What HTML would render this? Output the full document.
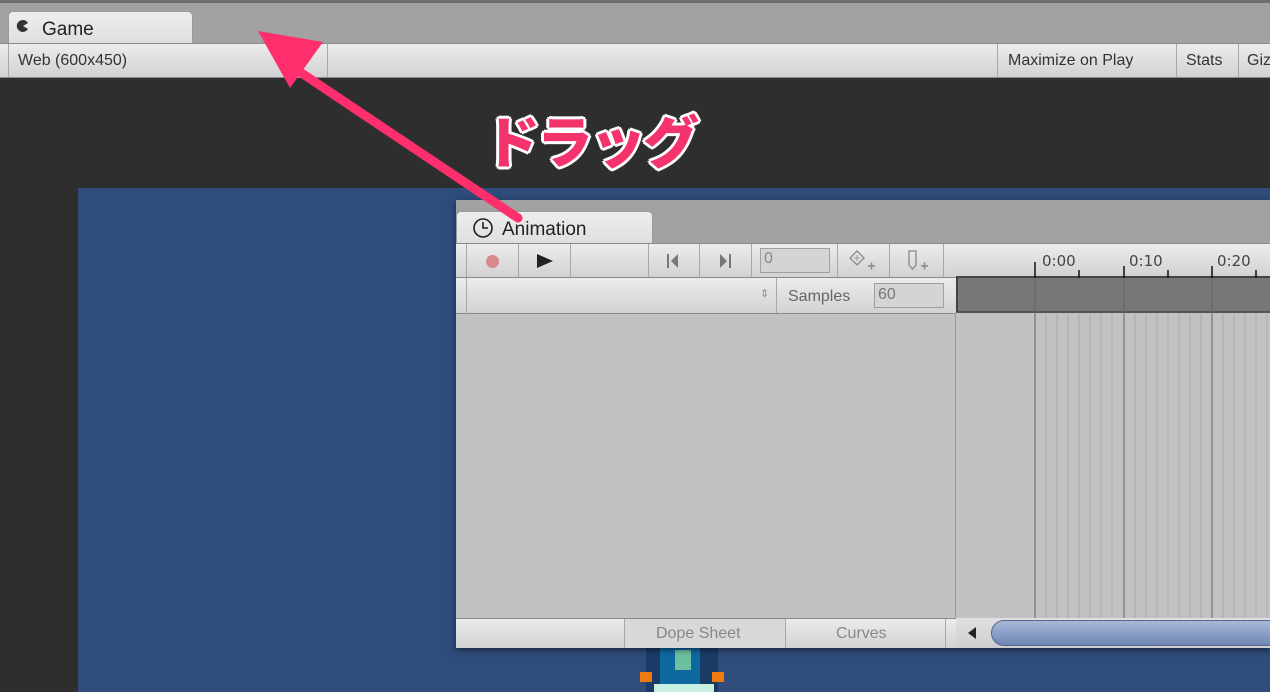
<!DOCTYPE html>
<html><head><meta charset="utf-8"><style>
*{margin:0;padding:0;box-sizing:border-box}
body{width:1270px;height:692px;overflow:hidden;position:relative;background:#2e2e2e;font-family:"Liberation Sans","DejaVu Sans",sans-serif;font-size:16px;color:#222}
.a{position:absolute}
.tb{background:linear-gradient(#ececec,#d2d2d2);border-top:1px solid #8a8a8a;border-bottom:1px solid #8a8a8a}
.dv{position:absolute;top:0;bottom:0;width:1px;background:#a8a8a8}
.t{position:absolute;font-size:16px;color:#333;white-space:nowrap}
</style></head><body>
<div class="a" style="left:0;top:0;width:1270px;height:44px;background:#a2a2a2;border-top:3px solid #6e6e6e"></div>
<div class="a" style="left:8px;top:11px;width:185px;height:34px;background:linear-gradient(#eeeeee,#dedede);border:1px solid #9a9a9a;border-bottom:none;border-radius:5px 5px 0 0"></div>
<svg class="a" style="left:15px;top:19px" width="18" height="14"><path d="M8 1a6 6 0 1 0 5 9L8 7l5-3A6 6 0 0 0 8 1z" fill="#333"/></svg>
<div class="t" style="left:42px;top:19px;font-size:19px;color:#222">Game</div>
<div class="a tb" style="left:0;top:43px;width:1270px;height:35px">
 <div class="dv" style="left:8px"></div><div class="dv" style="left:327px"></div><div class="dv" style="left:997px"></div><div class="dv" style="left:1176px"></div><div class="dv" style="left:1238px"></div>
 <div class="t" style="left:18px;top:8px">Web (600x450)</div>
 <div class="t" style="left:1008px;top:8px">Maximize on Play</div>
 <div class="t" style="left:1186px;top:8px">Stats</div>
 <div class="t" style="left:1247px;top:8px">Giz</div>
</div>
<div class="a" style="left:78px;top:188px;width:1192px;height:504px;background:#2f4c7a"></div>
<!-- sprite -->
<div class="a" style="left:646px;top:648px;width:72px;height:44px;background:#1a3b66"></div>
<div class="a" style="left:660px;top:648px;width:40px;height:44px;background:#0f68a0"></div>
<div class="a" style="left:675px;top:650px;width:16px;height:20px;background:#6cc0a0"></div>
<div class="a" style="left:640px;top:672px;width:12px;height:10px;background:#f07a10"></div>
<div class="a" style="left:712px;top:672px;width:12px;height:10px;background:#f07a10"></div>
<div class="a" style="left:654px;top:684px;width:60px;height:8px;background:#c8f0e0"></div>
<!-- Animation window -->
<div class="a" style="left:456px;top:200px;width:814px;height:448px;background:#c2c2c2;box-shadow:0 2px 6px rgba(0,0,0,.5)"></div>
<div class="a" style="left:456px;top:200px;width:814px;height:44px;background:#a2a2a2"></div>
<div class="a" style="left:456px;top:211px;width:197px;height:34px;background:linear-gradient(#eeeeee,#dedede);border:1px solid #9a9a9a;border-bottom:none;border-radius:5px 5px 0 0"></div>
<svg class="a" style="left:472px;top:217px" width="22" height="22"><circle cx="11" cy="11" r="9" fill="none" stroke="#222" stroke-width="1.6"/><path d="M11 5v6h5" fill="none" stroke="#222" stroke-width="1.6"/></svg>
<div class="t" style="left:502px;top:219px;font-size:19px;color:#222">Animation</div>
<div class="a tb" style="left:456px;top:243px;width:500px;height:35px">
 <div class="dv" style="left:10px"></div><div class="dv" style="left:62px"></div><div class="dv" style="left:114px"></div><div class="dv" style="left:192px"></div><div class="dv" style="left:243px"></div><div class="dv" style="left:295px"></div><div class="dv" style="left:381px"></div><div class="dv" style="left:433px"></div><div class="dv" style="left:487px"></div>
 <div class="a" style="left:30px;top:11px;width:13px;height:13px;border-radius:50%;background:#d88a8a"></div>
 <svg class="a" style="left:78px;top:8px" width="22" height="18"><path d="M3 2l16 7-16 7z" fill="#222"/></svg>
 <svg class="a" style="left:210px;top:8px" width="14" height="18"><path d="M2 2v14" stroke="#555" stroke-width="1.5"/><path d="M12 2L5 9l7 7z" fill="#777"/></svg>
 <svg class="a" style="left:262px;top:8px" width="14" height="18"><path d="M12 2v14" stroke="#555" stroke-width="1.5"/><path d="M2 2l7 7-7 7z" fill="#777"/></svg>
 <div class="a" style="left:304px;top:4px;width:70px;height:25px;border:1px solid #a0a0a0;background:#d4d4d4"></div>
 <div class="t" style="left:308px;top:6px;color:#888">0</div>
 <svg class="a" style="left:392px;top:5px" width="30" height="24"><path d="M9 2l7 7-7 7-7-7z" fill="none" stroke="#888" stroke-width="1.3"/><path d="M9 6v6M6 9h6" stroke="#999"/><path d="M20 17h7M23.5 13.5v7" stroke="#888" stroke-width="1.5"/></svg>
 <svg class="a" style="left:449px;top:5px" width="30" height="24"><path d="M4 2h7v14l-3.5 4L4 16z" fill="none" stroke="#888" stroke-width="1.3"/><path d="M16 17h7M19.5 13.5v7" stroke="#888" stroke-width="1.5"/></svg>
</div>
<div class="a tb" style="left:956px;top:243px;width:314px;height:35px;border-bottom:2px solid #444"></div>
<div class="a" style="left:956px;top:278px;width:314px;height:35px;background:#777;border-left:2px solid #444;border-bottom:2px solid #555"></div>
<div class="a tb" style="left:456px;top:277px;width:500px;height:37px">
 <div class="dv" style="left:10px"></div><div class="dv" style="left:320px"></div>
 <div class="t" style="left:304px;top:9px;color:#888;font-size:11px">⇕</div>
 <div class="t" style="left:332px;top:10px;color:#666">Samples</div>
 <div class="a" style="left:418px;top:5px;width:70px;height:25px;border:1px solid #a0a0a0;background:#d4d4d4"></div>
 <div class="t" style="left:422px;top:8px;color:#777">60</div>
</div>
<div class="a" style="left:955px;top:313px;width:1px;height:305px;background:#999"></div>
<svg class="a" style="left:956px;top:244px" width="314" height="374">
 <g stroke="#111" stroke-width="1.5"><path d="M79 18v16M168 22v12M256 22v12M123 26v8M212 26v8M300 26v8"/></g>
 <g stroke="#666" stroke-width="1"><path d="M79 34v340M168 34v340M256 34v340"/></g>
 <g stroke="#aaa" stroke-width="1"><path d="M90 70v304M101 70v304M112 70v304M123 70v304M134 70v304M145 70v304M156 70v304M179 70v304M190 70v304M201 70v304M212 70v304M223 70v304M234 70v304M245 70v304M267 70v304M278 70v304M289 70v304M300 70v304M311 70v304"/></g>
 <text x="86" y="22" font-family="DejaVu Sans" font-size="15" fill="#444">0:00</text>
 <text x="173" y="22" font-family="DejaVu Sans" font-size="15" fill="#444">0:10</text>
 <text x="261" y="22" font-family="DejaVu Sans" font-size="15" fill="#444">0:20</text>
</svg>
<div class="a tb" style="left:456px;top:618px;width:500px;height:30px;border-bottom:none">
 <div class="dv" style="left:168px"></div><div class="dv" style="left:329px"></div><div class="dv" style="left:489px"></div>
 <div class="a" style="left:169px;top:0;width:160px;height:29px;background:#d8d8d8"></div>
 <div class="t" style="left:200px;top:6px;color:#888">Dope Sheet</div>
 <div class="t" style="left:380px;top:6px;color:#888">Curves</div>
</div>
<div class="a" style="left:956px;top:618px;width:314px;height:30px;background:linear-gradient(#e0e0e0,#cfcfcf)"></div>
<svg class="a" style="left:966px;top:625px" width="12" height="16"><path d="M10 2L2 8l8 6z" fill="#222"/></svg>
<div class="a" style="left:991px;top:620px;width:290px;height:26px;border-radius:13px;background:linear-gradient(#a8b8d8,#6f86b4);border:1px solid #56688e"></div>
<!-- arrow -->
<svg class="a" style="left:0;top:0" width="1270" height="692">
 <path d="M518 218L300 72" stroke="#ff2f6e" stroke-width="9" stroke-linecap="round"/>
 <path d="M258 31L323 42L290 88z" fill="#ff2f6e"/>
</svg>
<div class="t" style="left:484px;top:102px;font-size:56px;font-weight:900;color:#f2336c;font-family:'Noto Sans CJK JP',sans-serif;letter-spacing:-3px;text-shadow:0 0 3px #fff,2px 2px 0 #fff,-2px -2px 0 #fff,2px -2px 0 #fff,-2px 2px 0 #fff,3px 0 0 #fff,-3px 0 0 #fff,0 3px 0 #fff,0 -3px 0 #fff;line-height:76px">ドラッグ</div>
</body></html>
